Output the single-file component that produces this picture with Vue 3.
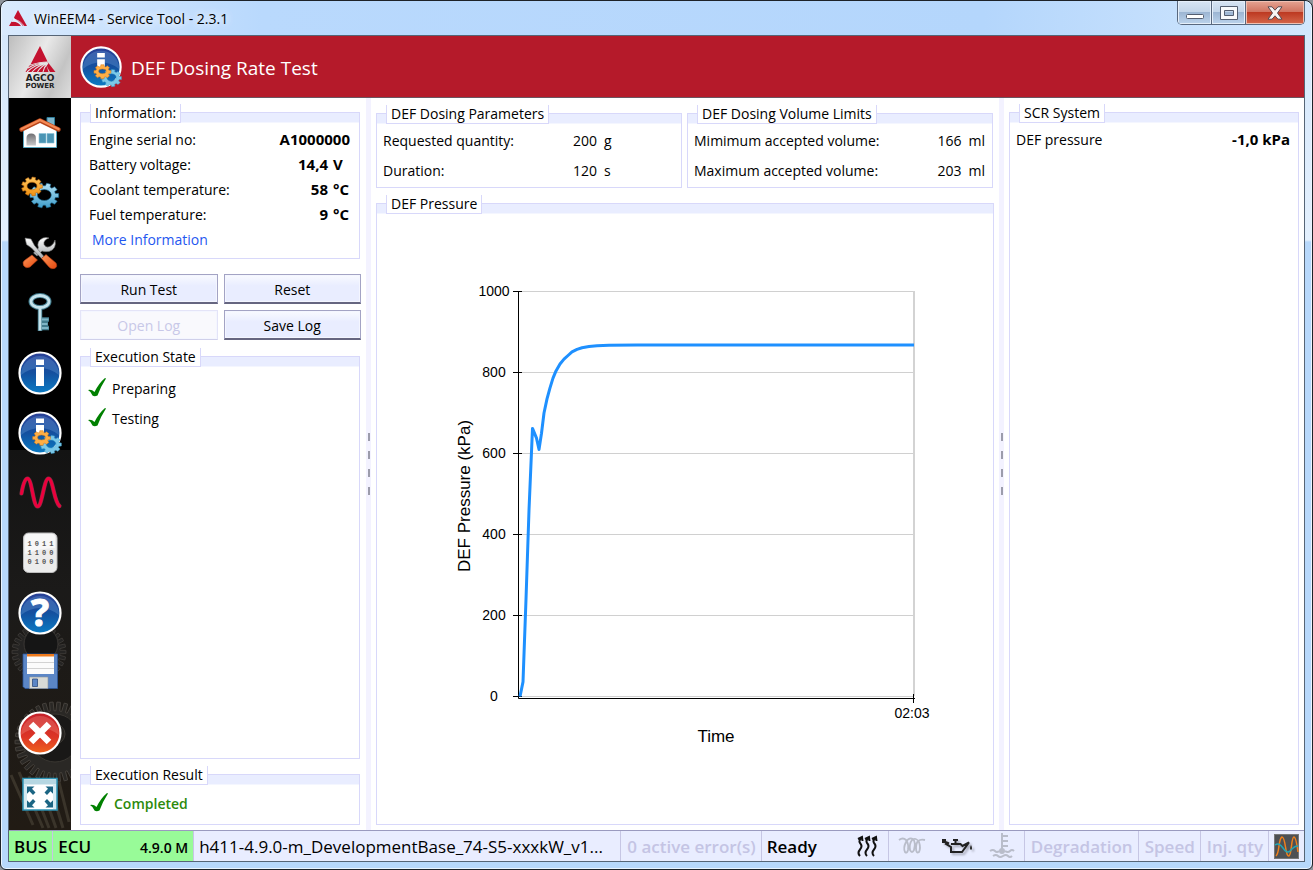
<template>
  <div class="window">
    <header class="titlebar">
      <svg class="app-logo" viewBox="0 0 18 16">
        <path d="M9 0 L18 16 H14 Q10 11 6 9 L5 7.500 Z" fill="#c4122f" />
        <path d="M4.500 8.500 L2.500 12 Q8 11 12 16 H0 L2 12.500" fill="#c4122f" />
        <path d="M3 11 Q9 10 13 16 M4 9 Q11 10 15 16" stroke="#eef5ff" stroke-width=".7" fill="none" />
      </svg>
      <span class="caption">WinEEM4 - Service Tool - 2.3.1</span>
      <div class="window-buttons">
        <button type="button" class="win-btn" aria-label="Minimize">
          <svg class="min" width="18" height="6" viewBox="0 0 18 6"><rect x=".5" y=".5" width="17" height="4" rx="1" fill="#fff" stroke="#545e70" /></svg>
        </button>
        <button type="button" class="win-btn" aria-label="Maximize">
          <svg width="18" height="14" viewBox="0 0 18 14"><path d="M.5 .5h17v13H.5z M4.500 4.500v5h9v-5z" fill="#f8fafc" fill-rule="evenodd" stroke="#545e70" /></svg>
        </button>
        <button type="button" class="win-btn close" aria-label="Close">
          <svg width="16" height="14" viewBox="0 0 16 14"><path d="M1 .8h4l3 3.400L11 .8h4L10.500 7l4.500 6.200h-4L8 9.800l-3 3.400H1L5.500 7z" fill="#f6f4f4" stroke="#5a4a50" /></svg>
        </button>
      </div>
    </header>

    <div class="client">
      <div class="banner">
        <div class="brand">
          <svg width="34" height="42" viewBox="0 0 34 42">
            <path d="M17 0 L24.500 15.500 Q17 15.500 7.500 18.500 Z" fill="#c4122f" />
            <path d="M25 16.500 L32.500 26 H27 Q24 22 23 17 Z" fill="#c4122f" />
            <path d="M6.500 19.500 Q15 16.500 22.500 16.500 L25.500 26 H2.500 Z" fill="#c4122f" />
            <path d="M4 26 Q12 18 24 17 M9 26 Q15 19 25 17 M14.500 26 Q18 20 25 17 M20 26 Q21 21 25 17 M5 22 Q13 17 24 16.500" stroke="#e4e4e4" stroke-width="1.100" fill="none" />
            <text x="17" y="34.500" class="brand-text" font-size="9">AGCO</text>
            <text x="17" y="41.500" class="brand-text" font-size="7">POWER</text>
          </svg>
        </div>
        <svg class="banner-icon" viewBox="0 0 48 48"><use href="#i-infogears" /></svg>
        <h1>DEF Dosing Rate Test</h1>
      </div>

      <div class="body">
        <nav class="sidebar">
          <svg class="backdrop" viewBox="0 0 62 400" preserveAspectRatio="xMidYMax slice">
            <defs>
              <linearGradient id="fade" x1="0" y1="0" x2="0" y2="1">
                <stop offset="0" stop-color="#121212" />
                <stop offset=".4" stop-color="#1b1a19" />
                <stop offset="1" stop-color="#211b14" />
              </linearGradient>
            </defs>
            <rect width="62" height="400" fill="url(#fade)" />
            <path :d="gear(30, 222, 27, 27, 26)" fill="#252423" stroke="#3a3734" />
            <circle cx="32" cy="214" r="17" fill="#151515" stroke="#3a3734" />
            <path :d="gear(46, 312, 40, 40, 34)" fill="#2a2825" stroke="#45413c" />
            <circle cx="46" cy="308" r="24" fill="#191817" stroke="#3a3732" />
            <circle cx="46" cy="304" r="10" fill="#24221f" stroke="#3a3733" />
            <path d="M2 345 24 395 M10 342 34 398 M20 346 40 398 M30 350 47 398 M40 352 54 398 M50 352 60 392" stroke="#3a342a" stroke-width="3" />
          </svg>
          <button v-for="item in menu" :key="item.id" type="button" :aria-label="item.label">
            <svg width="48" height="48" viewBox="0 0 48 48"><use :href="'#i-' + item.id" /></svg>
          </button>
        </nav>

        <main class="content">
          <div class="left">
            <section class="group">
              <div class="strip"><h2>Information:</h2></div>
              <dl class="info">
                <div v-for="row in info" :key="row.label">
                  <dt>{{ row.label }}</dt>
                  <dd>{{ row.value }}<span v-if="row.unit" class="unit">{{ row.unit }}</span></dd>
                </div>
              </dl>
              <a class="more" href="#">More Information</a>
            </section>

            <div class="actions">
              <button type="button">Run Test</button>
              <button type="button">Reset</button>
              <button type="button" disabled>Open Log</button>
              <button type="button">Save Log</button>
            </div>

            <section class="group grow">
              <div class="strip"><h2>Execution State</h2></div>
              <ul class="steps">
                <li v-for="step in steps" :key="step">
                  <svg width="18" height="20" viewBox="0 0 18 20"><use href="#i-check" /></svg>{{ step }}
                </li>
              </ul>
            </section>

            <section class="group result">
              <div class="strip"><h2>Execution Result</h2></div>
              <p><svg width="18" height="20" viewBox="0 0 18 20"><use href="#i-check" /></svg>Completed</p>
            </section>
          </div>

          <div class="splitter"><i v-for="n in 4" :key="n"></i></div>

          <div class="center">
            <div class="pair">
              <section class="group">
                <div class="strip"><h2>DEF Dosing Parameters</h2></div>
                <dl class="params fixed">
                  <div><dt>Requested quantity:</dt><dd>200<span>g</span></dd></div>
                  <div><dt>Duration:</dt><dd>120<span>s</span></dd></div>
                </dl>
              </section>
              <section class="group">
                <div class="strip"><h2>DEF Dosing Volume Limits</h2></div>
                <dl class="params">
                  <div><dt>Mimimum accepted volume:</dt><dd>166<span>ml</span></dd></div>
                  <div><dt>Maximum accepted volume:</dt><dd>203<span>ml</span></dd></div>
                </dl>
              </section>
            </div>

            <section class="group grow chart-group">
              <div class="strip"><h2>DEF Pressure</h2></div>
              <svg class="chart" viewBox="0 0 616 610">
                <g v-for="t in ticks" :key="t">
                  <line x1="142" x2="537" :y1="tickY(t)" :y2="tickY(t)" stroke="#d0d0d0" />
                  <line x1="136" x2="145" :y1="tickY(t)" :y2="tickY(t)" stroke="#000" />
                  <text x="117" :y="tickY(t) + 4" class="tick">{{ t }}</text>
                </g>
                <line x1="537" x2="537" y1="77" y2="482" stroke="#d3d3d3" stroke-width="2" />
                <path d="M141.500 77V484.500H538 M536.500 480V489" fill="none" stroke="#000" />
                <polyline :points="curve" fill="none" stroke="#1e90ff" stroke-width="3" stroke-linejoin="round" />
                <text x="535" y="504" class="tick">02:03</text>
                <text x="339" y="528" class="axis-title">Time</text>
                <text transform="translate(93 282) rotate(-90)" class="axis-title">DEF Pressure (kPa)</text>
              </svg>
            </section>
          </div>

          <div class="splitter"><i v-for="n in 4" :key="n"></i></div>

          <div class="right">
            <section class="group grow">
              <div class="strip"><h2>SCR System</h2></div>
              <dl class="info scr">
                <div><dt>DEF pressure</dt><dd>-1,0 kPa</dd></div>
              </dl>
            </section>
          </div>
        </main>
      </div>

      <footer class="statusbar">
        <div class="cell green bus">BUS</div>
        <div class="cell green ecu"><span>ECU</span><small>4.9.0 M</small></div>
        <div class="cell file">h411-4.9.0-m_DevelopmentBase_74-S5-xxxkW_v1...</div>
        <div class="cell dim errors">0 active error(s)</div>
        <div class="cell ready">
          <span>Ready</span>
          <svg width="24" height="24" viewBox="0 0 24 24" fill="none" stroke="#111" stroke-width="2">
            <path v-for="x in [0, 7, 14]" :key="x" :d="`M${x + 4} 22 q-3 -3 0 -6.500 t0 -6.500 q-1.500 -2 1 -5 M${x + 2} 5 l4 -2 .5 4`" />
          </svg>
        </div>
        <div class="cell lamps">
          <svg width="28" height="24" viewBox="0 0 28 24" fill="none" stroke="#b9bdca" stroke-width="1.800">
            <path d="M1 6 Q5 3 8 6 Q11 10 10 16 Q9 20 7 18 Q5 14 8 8 Q11 3 15 5 Q18 8 16 16 Q14 20 12 16 Q11 10 14 6 Q18 3 21 8 Q23 14 21 18 Q18 20 18 14 Q18 4 27 6" />
          </svg>
          <svg class="oil" width="32" height="24" viewBox="0 0 32 24">
            <path d="M2 7 8 9.500 M10 10H19.500L21.500 12 28 8.500 21 18H10V13L4 9.500 M14.500 10V6.500 M12 6h5" fill="none" stroke="#222" stroke-width="2" />
            <path d="M1 5h4v4H1z" fill="#222" /><path d="M30 11 q2 4 0 5 q-2 -1 0 -5" fill="#222" />
          </svg>
          <svg width="26" height="28" viewBox="0 0 26 28" fill="none" stroke="#b9bdca" stroke-width="2">
            <path d="M13 1V19 M13 4h6 M13 9h6 M13 14h6 M1 19q3-2 5 0t4 0 M16 19q3 2 5 0t4 0 M4 24q3-2 5 0t5 0 5 0 4 0" />
            <circle cx="13" cy="19" r="2" fill="#b9bdca" />
          </svg>
        </div>
        <div class="cell dim">Degradation</div>
        <div class="cell dim">Speed</div>
        <div class="cell dim">Inj. qty</div>
        <div class="cell plot">
          <svg width="25" height="25" viewBox="0 0 25 25">
            <rect x=".5" y=".5" width="24" height="24" fill="#4d5054" stroke="#777" />
            <path d="M2 22 Q4 20 5 12 T8 3 Q10 3 11.500 13 T15 22 Q16.500 21 17.500 12 T20 3 Q22 3 24 18" fill="none" stroke="#f0801c" stroke-width="1.500" />
            <path d="M1 11 Q5 8 9 14 T16 17 Q20 12 24 12" fill="none" stroke="#22a5b4" stroke-width="1.500" />
          </svg>
        </div>
      </footer>
    </div>

    <svg class="sprites" aria-hidden="true">
      <defs>
        <linearGradient id="blue" x1="0" y1="0" x2="0" y2="1">
          <stop offset="0" stop-color="#2a3f96" /><stop offset=".5" stop-color="#14509f" /><stop offset="1" stop-color="#0b7cc4" />
        </linearGradient>
        <linearGradient id="red" x1="0" y1="0" x2="0" y2="1">
          <stop offset="0" stop-color="#c4202a" /><stop offset=".6" stop-color="#dc3526" /><stop offset="1" stop-color="#f0641e" />
        </linearGradient>
        <linearGradient id="gold" x1="0" y1="0" x2="0" y2="1">
          <stop offset="0" stop-color="#ffc862" /><stop offset="1" stop-color="#f0900f" />
        </linearGradient>
        <linearGradient id="sky" x1="0" y1="0" x2="0" y2="1">
          <stop offset="0" stop-color="#b4e2f4" /><stop offset="1" stop-color="#3f9dca" />
        </linearGradient>
        <linearGradient id="steel" x1="0" y1="0" x2="0" y2="1">
          <stop offset="0" stop-color="#fff" /><stop offset="1" stop-color="#a9adb0" />
        </linearGradient>
        <linearGradient id="orange" x1="0" y1="0" x2="1" y2="1">
          <stop offset="0" stop-color="#ff9a5c" /><stop offset="1" stop-color="#e4470d" />
        </linearGradient>
        <linearGradient id="door" x1="0" y1="0" x2="0" y2="1">
          <stop offset="0" stop-color="#6f6f72" /><stop offset="1" stop-color="#c9c9cb" />
        </linearGradient>

        <g id="i-home">
          <path d="M31 8.500h7.500V20L31 15z" fill="#7fb6cb" stroke="#2d7d9b" />
          <path d="M7.500 20 24 11 40.500 20V38.500H7.500z" fill="#fff" stroke="#5aa8c2" />
          <path d="M10.500 36.500V29q0-4.500 4.700-4.500t4.700 4.500v7.500z" fill="url(#door)" />
          <path d="M23 24.500h7V34h-7z M31 24.500h7V34h-7z" fill="#4b95b4" stroke="#8cc3d8" stroke-width=".6" />
          <path d="M5.500 20.500 24 11.500 42.500 20.500" fill="none" stroke="#b8461b" stroke-width="4.500" stroke-linejoin="round" stroke-linecap="round" />
          <path d="M5.500 20 24 11 42.500 20" fill="none" stroke="#f58a55" stroke-width="2.500" stroke-linejoin="round" stroke-linecap="round" />
        </g>

        <g id="i-gears">
          <path :d="gear(28.300, 26.500, 14.500, 12.500, 10) + ring(28.300, 26, 7, 5.500)" fill="url(#sky)" fill-rule="evenodd" stroke="#1c6d96" stroke-width=".6" />
          <path :d="gear(16, 17.500, 10.500, 9.500, 9) + ring(16, 17, 5, 3.800)" fill="url(#gold)" fill-rule="evenodd" stroke="#b8650c" stroke-width=".6" />
        </g>

        <g id="i-tools">
          <path d="M39 11 Q41 20 33 22.500 Q28 23 26 22 L21 27 17.500 24 22.500 19 Q20 12 27 9 Q30 8 33 9 Q27 11 28 15.500 Q30 19.500 34 17.500 Q38 15 39 11z" fill="url(#steel)" stroke="#777" stroke-width=".6" />
          <path d="M16 26 21.500 31 14 38 Q10 40 7.500 36.500 Q6 33 9 31z" fill="url(#orange)" stroke="#b23a10" stroke-width=".6" />
          <path d="M9 9 15 10 18.500 16.500 28 27.500 25.500 29.500 15.500 19 10.500 15.500z" fill="url(#steel)" stroke="#666" stroke-width=".6" />
          <path d="M25.500 29.500 30 25.500 40 34 Q42 38 38.500 39.500 Q35 40.500 33 38z" fill="url(#orange)" stroke="#b23a10" stroke-width=".6" />
        </g>

        <g id="i-key">
          <ellipse cx="24" cy="12.500" rx="9" ry="6" fill="none" stroke="#417b8d" stroke-width="5" />
          <path d="M24 18V42 M26 30.500h7 M26 35h6 M26 39h7" stroke="#417b8d" stroke-width="4.500" fill="none" />
          <ellipse cx="24" cy="12.500" rx="9" ry="6" fill="none" stroke="#c5e3ec" stroke-width="2.800" />
          <path d="M24 18V41.500" stroke="#c5e3ec" stroke-width="2.800" />
          <path d="M26 30.500h6.500 M26 35h5.500 M26 39h6.500" stroke="#7fb5c6" stroke-width="2" />
        </g>

        <g id="i-disc">
          <circle cx="24" cy="24" r="20.500" fill="url(#blue)" stroke="#fff" stroke-width="2.200" />
          <path d="M5 26 A19 19 0 0 1 43 26 Q34 19 24 19 T5 26z" fill="#7fb2e6" opacity=".28" />
        </g>

        <g id="i-info">
          <use href="#i-disc" />
          <path d="M20 10.500h8v5.500h-8z M20 18h8v19h-8z" fill="#fff" />
        </g>

        <g id="i-infogears">
          <use href="#i-disc" />
          <path d="M20 9.500h8v4.500h-8z M20 16h8v10h-8z" fill="#fff" />
          <path :d="gear(35, 35.500, 10.500, 9, 9) + ring(35, 35, 5, 4)" fill="#7cc8e8" fill-rule="evenodd" stroke="#3a9cc8" stroke-width=".5" />
          <path :d="gear(25.500, 29, 9, 7.500, 8) + ring(25.500, 28.500, 4, 2.500)" fill="#ffae45" fill-rule="evenodd" stroke="#d67a14" stroke-width=".5" />
        </g>

        <g id="i-wave" fill="none" stroke-linecap="round">
          <path d="M5.500 24.500 Q8 9.500 11.500 9.500 C16 9.500 17 37.500 21.700 37.500 C26 37.500 28 9.500 32.500 9.500 C37 9.500 38 33 43.500 37" stroke="#7a3444" stroke-width="4.200" />
          <path d="M5.500 24.500 Q8 9.500 11.500 9.500 C16 9.500 17 37.500 21.700 37.500 C26 37.500 28 9.500 32.500 9.500 C37 9.500 38 33 43.500 37" stroke="#ec003d" stroke-width="3" />
        </g>

        <g id="i-binary">
          <rect x="7.500" y="4" width="33.500" height="39.500" rx="5" fill="#ececec" stroke="#bdbdbd" />
          <path d="M9 9 q0-4 4-4h22q4 0 4 4v10q-15 0-30 6z" fill="#fff" opacity=".6" />
          <g class="bits">
            <text v-for="(bit, n) in bits" :key="n" :x="13.500 + (n % 4) * 7.300" :y="17 + Math.floor(n / 4) * 9">{{ bit }}</text>
          </g>
        </g>

        <g id="i-help">
          <use href="#i-disc" />
          <text x="24" y="37" class="question">?</text>
        </g>

        <g id="i-save">
          <path d="M7 5H41.500V39.500H9L7 37.500z" fill="#5b86c6" stroke="#2c579b" stroke-width=".8" />
          <path d="M11 5h27v20H11z" fill="#fbfbfb" />
          <path d="M11 5h27v2.500H11z" fill="#ee7a1c" />
          <path d="M11 13.500h27 M11 19.500h27" stroke="#d2d2d2" />
          <path d="M13.500 28h18.500V39.500H13.500z" fill="#d8dad6" stroke="#8c9298" stroke-width=".6" />
          <path d="M16.500 30h5v7.500h-5z" fill="#5b86c6" stroke="#2e4d7d" stroke-width=".8" />
        </g>

        <g id="i-exit">
          <circle cx="24" cy="24" r="20.500" fill="url(#red)" stroke="#fff" stroke-width="2.200" />
          <path d="M5 26 A19 19 0 0 1 43 26 Q34 19 24 19 T5 26z" fill="#ffb0a0" opacity=".25" />
          <path d="M15 15 33 33 M33 15 15 33" stroke="#fff" stroke-width="6.500" />
        </g>

        <g id="i-full" transform="translate(0 2)">
          <path d="M7 7.500H41V39H7z" fill="#fff" stroke="#2d93b4" stroke-width="1.600" />
          <path d="M8 8.500H40V13.500H8z" fill="#b6d7e2" />
          <path d="M8 13.500H11V38H8z M37 13.500H40V38H37z" fill="#d4eaf1" />
          <path d="M11 15.500h7.500l-2.500 2.300 3.500 3.700-2.500 2.500-3.500-3.700-2.500 2.500z M37 15.500h-7.500l2.500 2.300-3.500 3.700 2.500 2.500 3.500-3.700 2.500 2.500z M11 36.500h7.500l-2.500-2.300 3.500-3.700-2.500-2.500-3.500 3.700-2.500-2.500z M37 36.500h-7.500l2.500-2.300-3.500-3.700 2.500-2.500 3.500 3.700 2.500-2.500z" fill="#1b6583" />
        </g>

        <path id="i-check" d="M0 12 Q3.500 11 6.500 14 Q11 5 17 0 L18 .5 Q13 8 9.500 17.500 Q6.500 19 4.500 17.500 Q3.500 14 0 12z" fill="#008000" />
      </defs>
    </svg>
  </div>
</template>

<script setup>
const menu = [
  { id: 'home', label: 'Home' },
  { id: 'gears', label: 'Parameters' },
  { id: 'tools', label: 'Service' },
  { id: 'key', label: 'Login' },
  { id: 'info', label: 'Information' },
  { id: 'infogears', label: 'Tests' },
  { id: 'wave', label: 'Measurements' },
  { id: 'binary', label: 'Programming' },
  { id: 'help', label: 'Help' },
  { id: 'save', label: 'Save' },
  { id: 'exit', label: 'Exit' },
  { id: 'full', label: 'Full screen' }
]

const info = [
  { label: 'Engine serial no:', value: 'A1000000' },
  { label: 'Battery voltage:', value: '14,4', unit: 'V' },
  { label: 'Coolant temperature:', value: '58', unit: '°C' },
  { label: 'Fuel temperature:', value: '9', unit: '°C' }
]

const steps = ['Preparing', 'Testing']
const bits = '101111000100'.split('')

// pressure chart
const ticks = [0, 200, 400, 600, 800, 1000]
const tickY = (v) => 482.5 - v * 0.405

const samples = [
  [143, 0], [146, 36], [149, 240], [152, 460], [155.5, 662], [159.5, 638], [162, 610],
  [164.5, 650], [167, 700], [170, 735], [173, 762], [176, 786], [179, 804], [183, 821],
  [187, 833], [191, 842], [195, 851], [200, 857], [205, 861], [212, 864], [220, 866],
  [232, 867], [260, 868], [400, 868], [537, 868]
]
const curve = samples.map(([x, v]) => `${x},${tickY(v)}`).join(' ')

// toothed wheel outline
function gear(cx, cy, rx, ry, teeth) {
  const pts = []
  const step = (Math.PI * 2) / teeth
  for (let i = 0; i < teeth; i++) {
    const a = i * step
    const corners = [[-0.34, 0.78], [-0.24, 1], [0.24, 1], [0.34, 0.78]]
    corners.forEach(([o, r]) => {
      const t = a + o * step
      pts.push(`${(cx + Math.cos(t) * rx * r).toFixed(2)} ${(cy + Math.sin(t) * ry * r).toFixed(2)}`)
    })
  }
  return 'M' + pts.join('L') + 'Z'
}

function ring(cx, cy, rx, ry) {
  return `M${cx - rx} ${cy}a${rx} ${ry} 0 1 0 ${rx * 2} 0a${rx} ${ry} 0 1 0 ${-rx * 2} 0Z`
}
</script>

<style>
body {
  margin: 0;
  background: #8f959c;
}
</style>

<style scoped>
* {
  box-sizing: border-box;
}

.window {
  min-height: 100vh;
  display: flex;
  flex-direction: column;
  padding: 0 7px 7px;
  border: 1px solid #1d2228;
  border-radius: 8px 8px 6px 6px;
  background: linear-gradient(#d3e6fb 0, #e3f0fd 239px, #b7d8fb 241px, #b7d8fb 100%);
  box-shadow: inset 0 0 0 1px #eaf5ff;
  font-family: "Open Sans", "Noto Sans", sans-serif;
  font-size: 14px;
  color: #000;
}

button {
  font: inherit;
  padding: 0;
}

h1,
h2,
dl,
dd,
ul,
p {
  margin: 0;
  padding: 0;
  font-weight: 400;
}

/* title bar */
.titlebar {
  display: flex;
  align-items: center;
  height: 34px;
  margin: 0 -6px;
  padding: 0 0 0 7px;
  border-radius: 7px 7px 0 0;
  background: linear-gradient(90deg, #d9eafd 0, #b9d9fd 260px, #b4d6fc 75%, #d2e7fd 100%);
}

.app-logo {
  width: 18px;
  height: 16px;
}

.caption {
  padding: 0 8px 0 7px;
  text-shadow: 0 0 8px #fff, 0 0 8px #fff;
}

.window-buttons {
  display: flex;
  align-self: flex-start;
  margin-left: auto;
  margin-right: 6px;
  border: 1px solid #59687e;
  border-top: 0;
  border-radius: 0 0 5px 5px;
  overflow: hidden;
}

.win-btn {
  display: grid;
  place-items: center;
  width: 34px;
  height: 23px;
  border: 0;
  border-right: 1px solid #59687e;
  background: linear-gradient(#d7e5f4 0, #c2d4e8 48%, #9db6d3 50%, #bcd3ec 100%);
  box-shadow: inset 0 0 0 1px #e5effa;
}

.min {
  margin-top: 8px;
}

.win-btn.close {
  width: 58px;
  border-right: 0;
  background: linear-gradient(#e5a493 0, #d0735f 48%, #bd3a22 50%, #d5674b 100%);
  box-shadow: inset 0 0 0 1px #f0c0b2;
}

.client {
  flex: 1;
  display: flex;
  flex-direction: column;
  border: 1px solid #566576;
  background: #fff;
}

/* banner */
.banner {
  display: flex;
  align-items: center;
  height: 62px;
  color: #fff;
  background: #b51a2a;
  border-bottom: 1px solid #6b5560;
}

.brand {
  display: grid;
  place-items: center;
  width: 62px;
  height: 62px;
  background: linear-gradient(115deg, #bdbdbd, #e9e9e9 45%, #c4c4c4 75%, #dedede);
}

.brand-text {
  font-family: "DejaVu Sans", sans-serif;
  font-weight: 700;
  text-anchor: middle;
  fill: #222;
}

.banner-icon {
  width: 46px;
  height: 46px;
  margin: 0 7px;
}

h1 {
  padding-top: 3px;
  font-size: 19px;
}

.body {
  flex: 1;
  display: flex;
}

/* icon menu */
.sidebar {
  position: relative;
  width: 62px;
  padding: 5px 0 7px;
  background: #000;
}

.backdrop {
  position: absolute;
  left: 0;
  bottom: 0;
  width: 62px;
  height: 380px;
}

.sidebar button {
  position: relative;
  display: grid;
  place-items: center;
  width: 100%;
  height: 60px;
  border: 0;
  background: none;
}

.bits {
  font: 700 7px "Liberation Mono", monospace;
  text-anchor: middle;
  fill: #555;
}

.question {
  font: 700 38px "Open Sans", sans-serif;
  text-anchor: middle;
  fill: #fff;
  stroke: #fff;
  stroke-width: 1px;
}

/* panels */
.content {
  flex: 1;
  display: flex;
  padding: 0 5px 0 9px;
}

.left,
.center,
.right {
  display: flex;
  flex-direction: column;
  padding: 14px 0 5px;
}

.left {
  width: 281px;
}

.left .group {
  margin-right: 1px;
}

.center {
  flex: 1;
  padding-top: 15px;
}

.right {
  width: 290px;
}

.splitter {
  display: flex;
  flex-direction: column;
  align-items: center;
  justify-content: center;
  gap: 10px;
  width: 5px;
  margin: 0 5px;
  background: #f3f2ff;
}

.splitter i {
  width: 2px;
  height: 8px;
  background: #9c9cab;
}

.group {
  border: 1px solid #d8d8fa;
}

.grow {
  flex: 1;
}

.strip {
  display: flex;
  align-items: flex-end;
  height: 10px;
  border-bottom: 1px solid #f4f6ff;
  background: #e9edff;
}

h2 {
  margin: 0 0 -1px 9px;
  padding: 0 4px;
  font-size: 14px;
  line-height: 18px;
  border: 1px solid #d8d8fa;
  border-top: 0;
  background: #fff;
}

.info {
  padding: 4px 9px 0 8px;
}

.info div,
.params div {
  display: flex;
  justify-content: space-between;
  line-height: 25px;
}

.info dd {
  font-size: 15px;
  font-weight: 700;
}

.unit {
  display: inline-block;
  width: 17px;
  margin-left: 5px;
}

.scr {
  padding-left: 6px;
  padding-right: 8px;
}

.more {
  display: block;
  padding: 0 11px 6px;
  line-height: 25px;
  color: #1f57f0;
  text-decoration: none;
}

.actions {
  display: grid;
  grid-template-columns: 1fr 1fr;
  gap: 6px;
  margin: 15px 0 16px;
}

.actions button {
  height: 30px;
  padding-top: 1px;
  border: 1px solid #a3a3c4;
  border-bottom: 2px solid #666680;
  background: linear-gradient(#f9faff 0, #e9edff 40%);
  box-shadow: inset 0 0 0 1px #f4f6ff;
  color: #000;
}

.actions button:disabled {
  border: 1px solid #e4e4f8;
  border-bottom-color: #d0d0ea;
  background: #f9f9fd;
  color: #c8c8e8;
}

.steps {
  padding: 6px 7px;
  list-style: none;
}

.steps li,
.result p {
  display: flex;
  align-items: center;
  gap: 6px;
  height: 30px;
}

.result {
  margin-top: 15px;
}

.result p {
  padding: 0 9px;
  margin: 3px 0 6px;
  font-weight: 600;
  color: #2c8a0c;
}

.pair {
  display: grid;
  grid-template-columns: 1fr 1fr;
  gap: 5px;
  margin: 0 1px 15px 0;
}

.params {
  padding: 2px 7px 1px 6px;
}

.params div {
  line-height: 30px;
}

.fixed {
  display: grid;
}

.fixed div {
  justify-content: flex-start;
}

.fixed dt {
  width: 190px;
}

.params span {
  margin-left: 7px;
}

.chart-group {
  display: flex;
  flex-direction: column;
}

.chart {
  flex: 1;
  width: 100%;
  min-height: 0;
}

.tick,
.axis-title {
  font: 14px "Liberation Sans", sans-serif;
  text-anchor: middle;
}

.axis-title {
  font-size: 17px;
}

/* status bar */
.statusbar {
  display: flex;
  height: 31px;
  border-top: 1px solid #9a9abf;
  background: #e9edff;
  font-size: 17px;
}

.cell {
  display: flex;
  align-items: center;
  padding: 0 5px;
  white-space: nowrap;
  border-right: 1px solid #c6c6e4;
}

.green {
  background: #98fb98;
  font-weight: 600;
}

.ecu {
  justify-content: space-between;
  width: 141px;
}

.ecu small {
  padding-top: 3px;
  font-size: 14px;
}

.file {
  flex: 1;
  min-width: 0;
  overflow: hidden;
}

.dim {
  padding-left: 6px;
  color: #c4c4e4;
  font-weight: 600;
}

.ready {
  justify-content: space-between;
  width: 127px;
  padding-right: 8px;
  font-weight: 600;
}

.lamps {
  justify-content: space-between;
  width: 136px;
  padding: 0 9px;
}

.oil {
  filter: drop-shadow(2px 2px 1px #a5a8b8);
}

.plot {
  border-right: 0;
}

.sprites {
  position: absolute;
  width: 0;
  height: 0;
}
</style>
